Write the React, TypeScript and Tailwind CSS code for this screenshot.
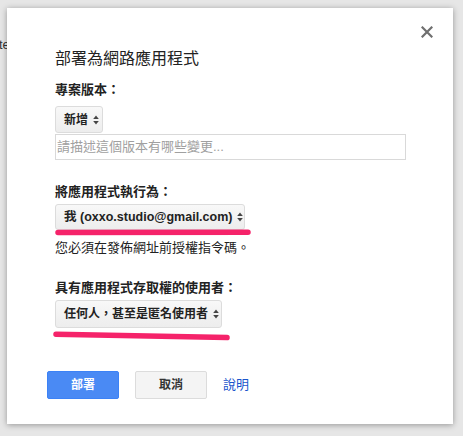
import React from "react";

const FONT = '"Liberation Sans", "Noto Sans CJK TC", Arial, sans-serif';

function UpDown() {
  return (
    <svg width="6" height="10" viewBox="0 0 6 10" className="shrink-0">
      <path d="M3 0.5 L5.8 4 H0.2 Z" fill="#444" />
      <path d="M3 9.5 L5.8 6 H0.2 Z" fill="#444" />
    </svg>
  );
}

function SelectBox({ label, className }: { label: string; className: string }) {
  return (
    <div
      className={`inline-flex items-center gap-[5px] rounded-[3px] border border-[#dcdcdc] bg-gradient-to-b from-[#f8f8f8] to-[#ededed] pl-[8px] pr-[4px] font-bold text-[#222] ${className}`}
    >
      <span className="whitespace-nowrap">{label}</span>
      <UpDown />
    </div>
  );
}

function Marker({ width, height, d }: { width: number; height: number; d: string }) {
  return (
    <svg width={width} height={height} viewBox={`0 0 ${width} ${height}`} className="block">
      <path d={d} stroke="#f5236a" strokeWidth="5.5" strokeLinecap="round" fill="none" />
    </svg>
  );
}

export default function App() {
  return (
    <div
      className="relative h-[436px] w-[463px] overflow-hidden bg-[#e6e6e6] pl-[7px] pt-[8px]"
      style={{ fontFamily: FONT }}
    >
      <span className="absolute left-[-1px] top-[35px] text-[13px] text-[#333]">te</span>

      <div className="relative z-10 h-[416px] w-[446px] bg-white pl-[40px] pt-[39px] shadow-[0_1px_6px_rgba(0,0,0,0.35)]">
        <button className="absolute left-[413px] top-[17px] flex h-[14px] w-[14px] items-center justify-center">
          <svg width="12" height="12" viewBox="0 0 12 12">
            <path d="M1.5 1.5 L10.5 10.5 M10.5 1.5 L1.5 10.5" stroke="#6f6f6f" strokeWidth="2.2" strokeLinecap="square" />
          </svg>
        </button>

        <div className="ml-[8px] flex flex-col items-start">
          <h1 className="text-[16px] leading-[24px] font-normal text-[#222]">部署為網路應用程式</h1>

          <div className="mt-[10px] text-[13px] leading-[18px] font-bold text-[#222]">專案版本：</div>
          <SelectBox label="新增" className="mt-[7px] h-[27px] w-[48px] text-[12px]" />
          <div className="mt-[1px] flex h-[26px] w-[351px] items-center border border-[#d9d9d9] pl-[1px] text-[13px] text-[#a0a0a0]">
            請描述這個版本有哪些變更...
          </div>

          <div className="mt-[23px] text-[13px] leading-[18px] font-bold text-[#222]">將應用程式執行為：</div>
          <SelectBox label="我 (oxxo.studio@gmail.com)" className="mt-[3px] h-[26px] w-[190px] text-[12.5px]" />
          <div className="-mt-[1px]">
            <Marker width={198} height={7} d="M3 3.5 L193 3.2" />
          </div>
          <div className="mt-[3px] text-[13px] leading-[18px] text-[#222]">您必須在發佈網址前授權指令碼。</div>

          <div className="mt-[22px] text-[13px] leading-[18px] font-bold text-[#222]">具有應用程式存取權的使用者：</div>
          <SelectBox label="任何人，甚至是匿名使用者" className="mt-[3px] h-[28px] w-[167px] text-[12px]" />
          <div className="-ml-[2px] mt-[3px]">
            <Marker width={178} height={10} d="M3 3.2 L174 6.6" />
          </div>
        </div>

        <div className="mt-[30px] flex items-center">
          <button className="h-[28px] w-[72px] rounded-[2px] border border-[#3c82f6] bg-[#4a8af4] text-[12px] font-bold text-white">
            部署
          </button>
          <button className="ml-[16px] h-[28px] w-[72px] rounded-[2px] border border-[#dcdcdc] bg-[#f4f4f4] text-[12px] font-bold text-[#333]">
            取消
          </button>
          <a className="ml-[16px] text-[13px] text-[#1a55cc]">說明</a>
        </div>
      </div>
    </div>
  );
}
